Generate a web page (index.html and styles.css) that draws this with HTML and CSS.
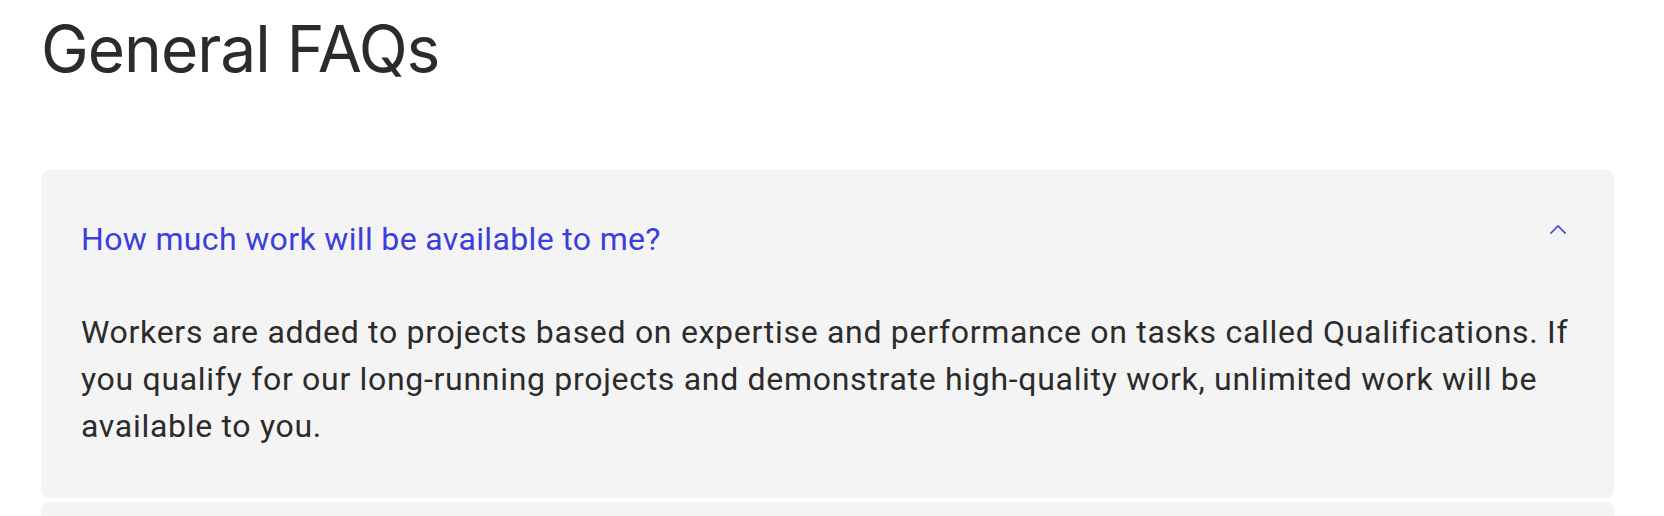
FILE: index.html
```html
<!DOCTYPE html>
<html lang="en">
<head>
<meta charset="utf-8">
<title>General FAQs</title>
<link rel="stylesheet" href="styles.css">
</head>
<body>
<main class="page">
  <h1 class="title">General FAQs</h1>
  <section class="faq-list">
    <article class="faq-item open">
      <div class="faq-question">
        <span class="q-text">How much work will be available to me?</span>
        <svg class="chevron" width="16" height="10" viewBox="0 0 16 10" aria-hidden="true">
          <polyline points="1,9 8,2 15,9" fill="none" stroke="#4444dd" stroke-width="1.6" stroke-linecap="square"/>
        </svg>
      </div>
      <p class="faq-answer">Workers are added to projects based on expertise and performance on tasks called Qualifications. If you qualify for our long-running projects and demonstrate high-quality work, unlimited work will be available to you.</p>
    </article>
    <div class="faq-item faq-stub" aria-hidden="true"></div>
  </section>
</main>
</body>
</html>
```

FILE: styles.css
```css
html, body {
  margin: 0;
  padding: 0;
  background: #ffffff;
}

.page {
  padding: 10px 50px 0 41px;
  display: flex;
  flex-direction: column;
}

.title {
  margin: 0;
  font-family: "Inter", "Liberation Sans", sans-serif;
  font-weight: 400;
  font-size: 64px;
  line-height: 77px;
  color: #2b2b2b;
  letter-spacing: -1px;
}

.faq-list {
  margin-top: 83px;
  display: flex;
  flex-direction: column;
  gap: 4px;
}

.faq-item {
  background: #f4f4f4;
  border-radius: 8px;
  padding: 46px 40px 48px 40px;
  display: flex;
  flex-direction: column;
  gap: 46px;
}

.faq-stub {
  min-height: 40px;
}

.faq-question {
  display: flex;
  align-items: flex-start;
  justify-content: space-between;
}

.q-text {
  font-family: "Roboto", "Liberation Sans", sans-serif;
  font-size: 32px;
  line-height: 47px;
  letter-spacing: 0.35px;
  color: #3d3ddb;
}

.chevron {
  margin-top: 8px;
  margin-right: 8px;
  flex: none;
}

.faq-answer {
  margin: 0;
  font-family: "Roboto", "Liberation Sans", sans-serif;
  font-size: 32px;
  line-height: 47px;
  letter-spacing: 0.7px;
  color: #2b2b2b;
}
```
